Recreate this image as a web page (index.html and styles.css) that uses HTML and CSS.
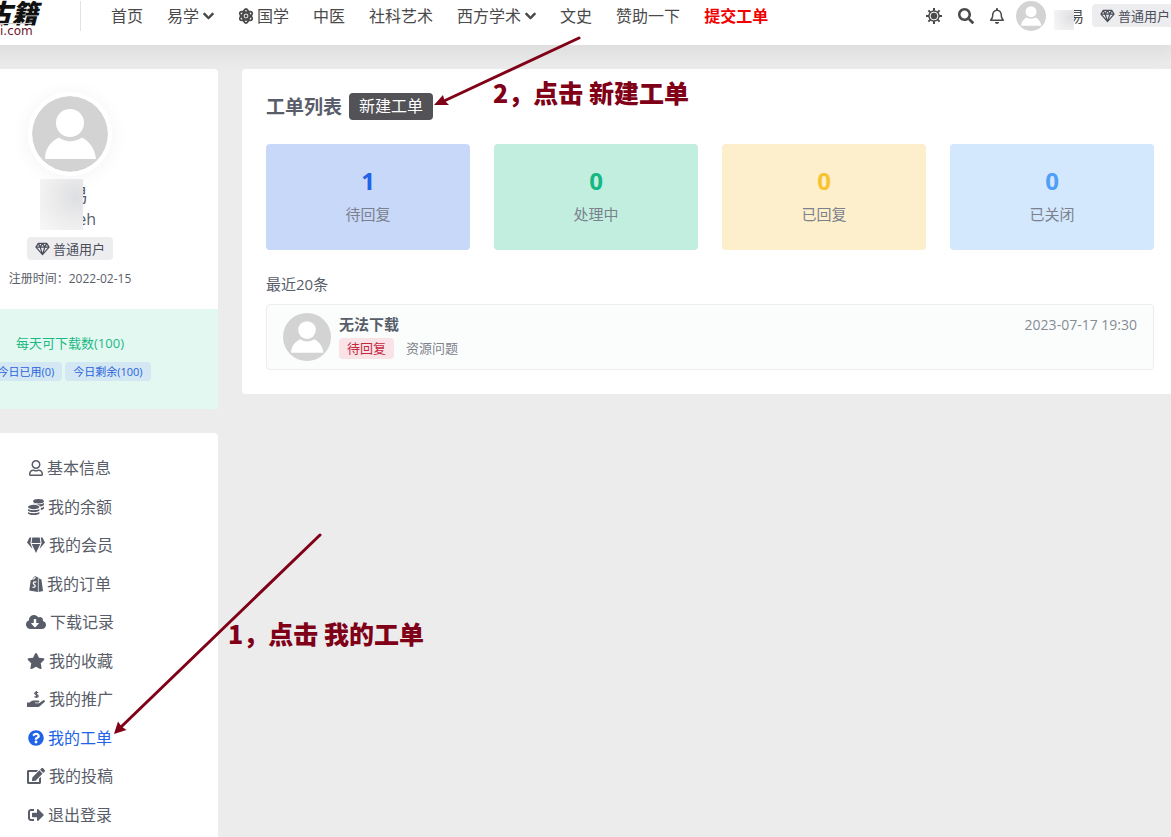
FILE: index.html
```html
<!DOCTYPE html>
<html lang="zh-CN">
<head>
<meta charset="utf-8">
<title>我的工单</title>
<link rel="stylesheet" href="styles.css">
</head>
<body>
<svg class="defs" aria-hidden="true">
  <symbol id="avatar" viewBox="0 0 76 76"><circle cx="38" cy="38" r="38" fill="#d3d3d3"/><circle cx="38" cy="27" r="14" fill="#fff"/><path d="M13 63C13 53 18 46 27 41.500q11 7.500 23 0C58 46 63 53 64 63Z" fill="#fff"/></symbol>
  <symbol id="gem" viewBox="0 0 16 14"><path d="M3.500 1h9L15 5 8 13 1 5ZM1 5h14M5.500 5 8 13l2.500-8M3.500 1l2 4L8 1l2.500 4 2-4" fill="none" stroke="currentColor" stroke-width="1.300" stroke-linejoin="round"/></symbol>
  <symbol id="chevron" viewBox="0 0 448 512"><path stroke="currentColor" stroke-width="30" d="M207.029 381.476L12.686 187.132c-9.373-9.373-9.373-24.569 0-33.941l22.667-22.667c9.357-9.357 24.522-9.375 33.901-.04L224 284.505l154.745-154.021c9.379-9.335 24.544-9.317 33.901.04l22.667 22.667c9.373 9.373 9.373 24.569 0 33.941L240.971 381.476c-9.373 9.372-24.569 9.372-33.942 0z"/></symbol>
</svg>
<div class="page">
  <header class="header">
    <a class="brand" href="#"><span class="brand-name">古籍</span><span class="brand-url">i.com</span></a>
    <nav class="nav">
      <a href="#">首页</a>
      <a href="#">易学<svg class="chev"><use href="#chevron"/></svg></a>
      <a href="#"><svg class="atom" viewBox="0 0 16 16"><g fill="none" stroke="currentColor" stroke-width="1.800"><ellipse cx="8" cy="8" rx="3.200" ry="7"/><ellipse cx="8" cy="8" rx="3.200" ry="7" transform="rotate(60 8 8)"/><ellipse cx="8" cy="8" rx="3.200" ry="7" transform="rotate(120 8 8)"/></g><circle cx="8" cy="8" r="1.500"/></svg>国学</a>
      <a href="#">中医</a>
      <a href="#">社科艺术</a>
      <a href="#">西方学术<svg class="chev"><use href="#chevron"/></svg></a>
      <a href="#">文史</a>
      <a href="#">赞助一下</a>
      <a class="hot" href="#">提交工单</a>
    </nav>
    <div class="tools">
      <button aria-label="切换主题"><svg viewBox="0 0 16 16"><g stroke="currentColor" stroke-width="2"><path d="M8 0v16M0 8h16M2.400 2.400l11.200 11.200M13.600 2.400 2.400 13.600"/></g><circle cx="8" cy="8" r="5.800"/><circle cx="8" cy="8" r="3.900" fill="none" stroke="#fff" stroke-width="1"/></svg></button>
      <button aria-label="搜索"><svg viewBox="0 0 512 512"><path d="M505 442.700L405.300 343c-4.500-4.500-10.600-7-17-7H372c27.600-35.300 44-79.700 44-128C416 93.100 322.900 0 208 0S0 93.100 0 208s93.100 208 208 208c48.300 0 92.700-16.400 128-44v16.300c0 6.400 2.500 12.500 7 17l99.700 99.700c9.400 9.400 24.600 9.400 33.900 0l28.300-28.300c9.400-9.400 9.400-24.600.1-34zM208 336c-70.700 0-128-57.200-128-128 0-70.700 57.200-128 128-128 70.700 0 128 57.200 128 128 0 70.700-57.200 128-128 128z"/></svg></button>
      <button aria-label="通知"><svg class="bell" viewBox="0 0 448 512"><path d="M439.390 362.290c-19.320-20.760-55.470-51.990-55.470-154.290 0-77.700-54.480-139.900-127.940-155.160V32c0-17.670-14.320-32-31.980-32s-31.980 14.330-31.980 32v20.840C118.560 68.100 64.080 130.300 64.080 208c0 102.300-36.150 133.530-55.470 154.290-6 6.450-8.660 14.160-8.610 21.710.11 16.400 12.980 32 32.100 32h383.800c19.120 0 32-15.600 32.100-32 .05-7.550-2.610-15.270-8.610-21.710zM67.530 368c21.220-27.970 44.420-74.330 44.530-159.420 0-.2-.06-.38-.06-.58 0-61.860 50.140-112 112-112s112 50.140 112 112c0 .2-.06.38-.06.58.11 85.100 23.310 131.460 44.530 159.420H67.530zM224 512c35.320 0 63.970-28.650 63.970-64H160.030c0 35.350 28.650 64 63.970 64z"/></svg></button>
      <a class="user" href="#"><svg class="user-avatar"><use href="#avatar"/></svg><span class="user-name">易<i class="mask"></i></span></a>
      <span class="level"><svg><use href="#gem"/></svg>普通用户</span>
    </div>
  </header>

  <div class="columns">
    <aside class="sidebar">
      <section class="profile">
        <div class="profile-main">
          <svg class="profile-avatar"><use href="#avatar"/></svg>
          <div class="identity"><span class="id-name">易</span><span class="id-login">eh</span><i class="mask"></i></div>
          <span class="level"><svg><use href="#gem"/></svg>普通用户</span>
          <p class="since">注册时间：2022-02-15</p>
        </div>
        <div class="quota">
          <p>每天可下载数(100)</p>
          <div class="badges"><span>今日已用(0)</span><span>今日剩余(100)</span></div>
        </div>
      </section>
      <nav class="menu">
        <a href="#"><svg class="w14" viewBox="0 0 448 512"><path d="M313.600 304c-28.700 0-42.500 16-89.600 16-47.100 0-60.800-16-89.600-16C60.200 304 0 364.200 0 438.400V464c0 26.500 21.500 48 48 48h352c26.500 0 48-21.500 48-48v-25.600c0-74.200-60.200-134.400-134.400-134.400zM400 464H48v-25.600c0-47.600 38.800-86.400 86.400-86.400 14.600 0 38.300 16 89.600 16 51.700 0 74.900-16 89.600-16 47.600 0 86.400 38.800 86.400 86.400V464zM224 288c79.500 0 144-64.500 144-144S303.500 0 224 0 80 64.500 80 144s64.500 144 144 144zm0-240c52.900 0 96 43.100 96 96s-43.100 96-96 96-96-43.100-96-96 43.100-96 96-96z"/></svg>基本信息</a>
        <a href="#"><svg class="w16" viewBox="0 0 16 16"><ellipse cx="10.500" cy="2.200" rx="5.300" ry="2.200"/><path d="M16 4v1.500c0 1-1.600 1.800-3.700 2.100C11.600 6 9 5 6 5L5.300 4.200C7 5.700 14 5.800 16 4ZM16 7.500V9c0 .9-1.200 1.600-3.200 2V9c1.300-.3 2.500-.8 3.200-1.500Z"/><ellipse cx="5.700" cy="8" rx="5.700" ry="2.200"/><path d="M0 10c2 1.600 9.300 1.600 11.400 0v1.300c0 2.400-11.400 2.400-11.400 0ZM0 13c2 1.600 9.300 1.600 11.400 0v1.200c0 2.400-11.400 2.400-11.400 0Z"/></svg>我的余额</a>
        <a href="#"><svg class="w18" viewBox="0 0 18 16"><path d="M5.300.5h7.400L13.500 6h-9ZM4.700 7h8.600L9 16ZM4.300.5 3.400 6 5.500 12 0 5.500 2.500.5ZM13.700.5l.9 5.500-2.100 6L18 5.500 15.500.5Z"/></svg>我的会员</a>
        <a href="#"><svg class="w14" viewBox="0 0 14 16"><path d="M1.700 4.200 3.400 3.700C4 1.500 5.400 0 6.700.2c.6 0 1 .5 1.200 1.100l1-.2V16L.3 14.500ZM9.600 1.500l1.300 1.600 1.500.2L14 14.900 9.600 16Z"/><path d="M4.400 3.500C5 2 5.800 1.300 6.600 1.300M7.300 6.200C5 5 3.500 7 5 8.300 7 9.700 6.400 12 3.400 11" fill="none" stroke="#fff" stroke-width="1.300"/></svg>我的订单</a>
        <a href="#"><svg class="w20" viewBox="0 0 640 512"><path d="M537.600 226.600c4.100-10.700 6.400-22.400 6.400-34.600 0-53-43-96-96-96-19.700 0-38.100 6-53.300 16.200C367 64.200 315.300 32 256 32c-88.400 0-160 71.600-160 160 0 2.700.1 5.400.2 8.100C40.200 219.800 0 273.200 0 336c0 79.500 64.500 144 144 144h368c70.700 0 128-57.300 128-128 0-61.900-44-113.600-102.400-125.400zm-132.900 88.700L299.300 420.700c-6.200 6.200-16.400 6.200-22.600 0L171.300 315.300c-10.100-10.100-2.900-27.300 11.300-27.300H248V176c0-8.800 7.200-16 16-16h48c8.800 0 16 7.200 16 16v112h65.400c14.200 0 21.400 17.200 11.300 27.300z"/></svg>下载记录</a>
        <a href="#"><svg class="w18" viewBox="0 0 576 512"><path d="M259.300 17.800L194 150.200 47.900 171.500c-26.200 3.800-36.700 36.100-17.700 54.600l105.700 103-25 145.500c-4.500 26.300 23.200 46 46.400 33.700L288 439.600l130.700 68.700c23.200 12.200 50.900-7.400 46.400-33.700l-25-145.500 105.700-103c19-18.500 8.500-50.800-17.700-54.600L382 150.200 316.700 17.800c-11.700-23.600-45.600-23.900-57.400 0z"/></svg>我的收藏</a>
        <a href="#"><svg class="w18" viewBox="0 0 18 16"><path d="M11.200 1.800C9.800.8 7.600 1.200 7.700 2.500c.2 1.400 3.500.9 3.500 2.500 0 1.300-2.400 1.400-3.700.4M9.400 0v7" fill="none" stroke="currentColor" stroke-width="1.200"/><path d="M0 11.500h2.500L4.600 10c.5-.3 1-.5 1.600-.5h5c1.500 0 1.500 2 0 2H8v.8h4l3.800-2.800c1.400-1 2.900.4 1.700 1.500L13 15.100c-.6.6-1.200.9-2 .9H0Z"/></svg>我的推广</a>
        <a class="active" href="#"><svg class="w16" viewBox="0 0 512 512"><path d="M504 256c0 136.997-111.043 248-248 248S8 392.997 8 256C8 119.083 119.043 8 256 8s248 111.083 248 248zM262.655 90c-54.497 0-89.255 22.957-116.549 63.758-3.536 5.286-2.353 12.415 2.715 16.258l34.699 26.310c5.205 3.947 12.621 3.008 16.665-2.122 17.864-22.658 30.113-35.797 57.303-35.797 20.429 0 45.698 13.148 45.698 32.958 0 14.976-12.363 22.667-32.534 33.976C247.128 238.528 216 254.941 216 296v4c0 6.627 5.373 12 12 12h56c6.627 0 12-5.373 12-12v-1.333c0-28.462 83.186-29.647 83.186-106.667 0-58.002-60.165-102-116.531-102zM256 338c-25.365 0-46 20.635-46 46 0 25.364 20.635 46 46 46s46-20.636 46-46c0-25.365-20.635-46-46-46z"/></svg>我的工单</a>
        <a href="#"><svg class="w18" viewBox="0 0 576 512"><path d="M402.600 83.200l90.200 90.200c3.800 3.800 3.800 10 0 13.800L274.400 405.600l-92.800 10.300c-12.400 1.400-22.900-9.100-21.500-21.500l10.300-92.800L388.800 83.200c3.800-3.800 10-3.800 13.800 0zm162-22.900l-48.800-48.800c-15.200-15.200-39.900-15.200-55.200 0l-35.400 35.400c-3.800 3.800-3.800 10 0 13.800l90.200 90.200c3.800 3.800 10 3.800 13.800 0l35.400-35.400c15.200-15.300 15.200-40 0-55.200zM384 346.200V448H64V128h229.800c3.200 0 6.200-1.300 8.500-3.500l40-40c7.600-7.600 2.200-20.500-8.500-20.500H48C21.500 64 0 85.500 0 112v352c0 26.500 21.500 48 48 48h352c26.500 0 48-21.500 48-48V306.200c0-10.700-12.900-16-20.500-8.500l-40 40c-2.200 2.300-3.500 5.300-3.500 8.500z"/></svg>我的投稿</a>
        <a href="#"><svg class="w16" viewBox="0 0 512 512"><path d="M497 273L329 441c-15 15-41 4.500-41-17v-96H152c-13.300 0-24-10.700-24-24v-96c0-13.300 10.700-24 24-24h136V88c0-21.400 25.900-32 41-17l168 168c9.300 9.400 9.300 24.600 0 34zM192 436v-40c0-6.600-5.400-12-12-12H96c-17.700 0-32-14.300-32-32V160c0-17.700 14.300-32 32-32h84c6.600 0 12-5.400 12-12V76c0-6.600-5.400-12-12-12H96c-53 0-96 43-96 96v192c0 53 43 96 96 96h84c6.600 0 12-5.400 12-12z"/></svg>退出登录</a>
      </nav>
    </aside>

    <main class="tickets">
      <div class="tickets-head"><h1>工单列表</h1><button class="create">新建工单</button></div>
      <div class="stats">
        <div class="stat blue"><strong>1</strong><span>待回复</span></div>
        <div class="stat green"><strong>0</strong><span>处理中</span></div>
        <div class="stat yellow"><strong>0</strong><span>已回复</span></div>
        <div class="stat sky"><strong>0</strong><span>已关闭</span></div>
      </div>
      <h2>最近20条</h2>
      <article class="ticket">
        <svg class="ticket-avatar"><use href="#avatar"/></svg>
        <div class="ticket-body">
          <a class="ticket-title" href="#">无法下载</a>
          <div class="ticket-meta"><span class="status">待回复</span><span>资源问题</span></div>
        </div>
        <time>2023-07-17 19:30</time>
      </article>
    </main>
  </div>

  <svg class="arrow arrow-two" viewBox="0 0 148 70"><path d="M145 2 10 65" fill="none" stroke="#800018" stroke-width="3" stroke-linecap="round"/><path d="M0 69 9 59 10.500 64.500 15 69Z" fill="#800018"/></svg>
  <p class="note note-two">2，点击 新建工单</p>
  <svg class="arrow arrow-one" viewBox="0 0 210 204"><path d="M207 2 8 194" fill="none" stroke="#800018" stroke-width="3" stroke-linecap="round"/><path d="M1 201 5 188.500 8.500 193.500 13.500 197Z" fill="#800018"/></svg>
  <p class="note note-one">1，点击 我的工单</p>
</div>
</body>
</html>
```
FILE: styles.css
```css
* { box-sizing: border-box; }

body {
  margin: 0;
  background: #ececec;
  color: #595d69;
  font: 16px/24px "Open Sans", "Noto Sans CJK SC", sans-serif;
}

p, h1, h2 { margin: 0; }
a { color: inherit; text-decoration: none; }
button { border: 0; background: none; padding: 0; font: inherit; color: inherit; cursor: pointer; }
svg { display: block; flex: none; fill: currentColor; }
.defs { position: absolute; width: 0; height: 0; }

.page {
  position: relative;
  height: 100vh;
  overflow: hidden;
}

/* header */
.header {
  display: flex;
  align-items: center;
  height: 45px;
  margin: 0 -7px 0 -78px;
  padding-bottom: 14px;
  background: #fff;
  color: #4a4a4a;
  box-shadow: 0 8px 24px rgba(0, 0, 0, .07);
}

.brand {
  display: flex;
  flex-direction: column;
  width: 159px;
  height: 30px;
  padding-left: 64px;
  border-right: 1px solid #e2e2e2;
}

.brand-name {
  height: 24px;
  color: #111;
  font: italic 900 26px/22px "Noto Sans CJK SC", sans-serif;
  white-space: nowrap;
}

.brand-url {
  width: 46px;
  padding-left: 14px;
  border-top: 1px solid #ccc;
  color: #6d1230;
  font: 12px/14px "DejaVu Sans", sans-serif;
}

.nav {
  display: flex;
  gap: 24px;
  margin-left: 30px;
  white-space: nowrap;
}

.nav a { display: flex; align-items: center; }
.nav .hot { color: #f00000; font-weight: 700; }
.chev { width: 11px; height: 12px; margin-left: 4px; }
.atom { width: 16px; height: 16px; margin-right: 3px; }

.tools {
  display: flex;
  align-items: center;
  margin-left: auto;
  white-space: nowrap;
}

.tools button { margin-right: 16px; }
.tools button svg { width: 16px; height: 16px; }
.tools button .bell { width: 14px; }
.user { display: flex; align-items: center; margin: 0 8px 0 -4px; }
.user-avatar { width: 30px; height: 30px; }
.user-name { position: relative; width: 38px; text-align: right; font-size: 15px; }

.mask {
  position: absolute;
  background: radial-gradient(circle at 85% 35%, #dedfe2, #ebebec 45%, #f8f8f8);
}

.user-name .mask { left: 8px; top: 6px; width: 20px; height: 20px; }

.level {
  display: inline-flex;
  align-items: center;
  gap: 3px;
  height: 23px;
  padding: 0 8px;
  border-radius: 4px;
  background: #ededf0;
  color: #4b4f5a;
  font-size: 13px;
}

.level svg { width: 15px; height: 14px; }

/* page columns */
.columns {
  display: flex;
  align-items: flex-start;
  gap: 24px;
  margin: 24px -7px 0 -78px;
}

.sidebar { flex: none; width: 296px; }

.profile {
  overflow: hidden;
  border-radius: 4px;
  background: #fff;
}

.profile-main {
  display: flex;
  flex-direction: column;
  align-items: center;
  padding: 23px 0 21px;
}

.profile-avatar {
  width: 84px;
  height: 84px;
  border: 4px solid #fff;
  border-radius: 50%;
  box-shadow: 0 2px 20px rgba(0, 0, 0, .05);
}

.identity {
  position: relative;
  display: flex;
  flex-direction: column;
  align-items: center;
  padding: 7px 0 6px;
}

.identity span { text-align: right; }
.id-name { width: 36px; font-size: 18px; }
.id-login { width: 52px; }
.identity .mask { left: -4px; top: 3px; width: 43px; height: 51px; }
.since { padding-top: 10px; font-size: 12px; line-height: 18px; }

.quota {
  display: flex;
  flex-direction: column;
  align-items: center;
  padding: 24px 0 28px;
  background: #e4f8f2;
  color: #1cb884;
  font-size: 13px;
  line-height: 20px;
}

.badges { display: flex; gap: 3px; margin-top: 9px; }

.badges span {
  padding: 0 8px;
  border-radius: 4px;
  background: #d3e8f2;
  color: #2b63dd;
  font-size: 11px;
  line-height: 19px;
}

.menu {
  display: grid;
  grid-auto-rows: 1fr;
  height: 417px;
  margin-top: 24px;
  padding: 16px 0;
  border-radius: 4px;
  background: #fff;
}

.menu a { display: flex; align-items: center; justify-content: center; gap: 4px; }
.menu svg { height: 16px; }
.menu .active { color: #2163e8; }
.w14 { width: 14px; }
.w16 { width: 16px; }
.w18 { width: 18px; }
.w20 { width: 20px; }

/* tickets */
.tickets {
  flex: 1;
  min-width: 0;
  padding: 24px;
  border-radius: 4px;
  background: #fff;
}

.tickets-head { display: flex; align-items: center; gap: 7px; }
h1 { font-size: 19px; line-height: 24px; }

.create {
  height: 27px;
  padding: 0 10px;
  border-radius: 4px;
  background: #535257;
  color: #fff;
  line-height: 27px;
}

.stats {
  display: grid;
  grid-template-columns: repeat(4, 1fr);
  gap: 24px;
  margin-top: 24px;
}

.stat {
  display: flex;
  flex-direction: column;
  align-items: center;
  padding: 23px 0 24px;
  border-radius: 4px;
}

.stat strong { font-size: 24px; line-height: 28px; }
.stat span { margin-top: 7px; color: #7b818d; font-size: 15px; }
.blue { background: #c8d8f9; }
.blue strong { color: #2163e8; }
.green { background: #c2eee0; }
.green strong { color: #13b981; }
.yellow { background: #fdefcb; }
.yellow strong { color: #f7c32e; }
.sky { background: #d3e7fd; }
.sky strong { color: #4f9ef8; }

h2 { margin: 22px 0 8px; font-size: 15px; font-weight: 400; }

.ticket {
  display: flex;
  gap: 8px;
  padding: 8px 16px;
  border: 1px solid #ebeeef;
  border-radius: 4px;
  background: #fbfdfd;
}

.ticket-avatar { width: 48px; height: 48px; }
.ticket-title { display: block; font-size: 15px; line-height: 22px; font-weight: 700; }

.ticket-meta {
  display: flex;
  gap: 12px;
  margin-top: 3px;
  color: #7d828c;
  font-size: 13px;
  line-height: 21px;
}

.status { padding: 0 8px; border-radius: 4px; background: #f9e3e7; color: #c4283f; }
time { margin-left: auto; color: #868b94; font-size: 14px; }

/* annotations laid over the page */
.arrow { position: absolute; }
.arrow-two { left: 434px; top: 36px; width: 148px; height: 70px; }
.arrow-one { left: 113px; top: 533px; width: 210px; height: 204px; }

.note {
  position: absolute;
  color: #800018;
  font: 900 25px/32px "Noto Sans CJK SC", sans-serif;
  white-space: nowrap;
}

.note-two { left: 493px; top: 76px; }
.note-one { left: 228px; top: 617px; }
```
